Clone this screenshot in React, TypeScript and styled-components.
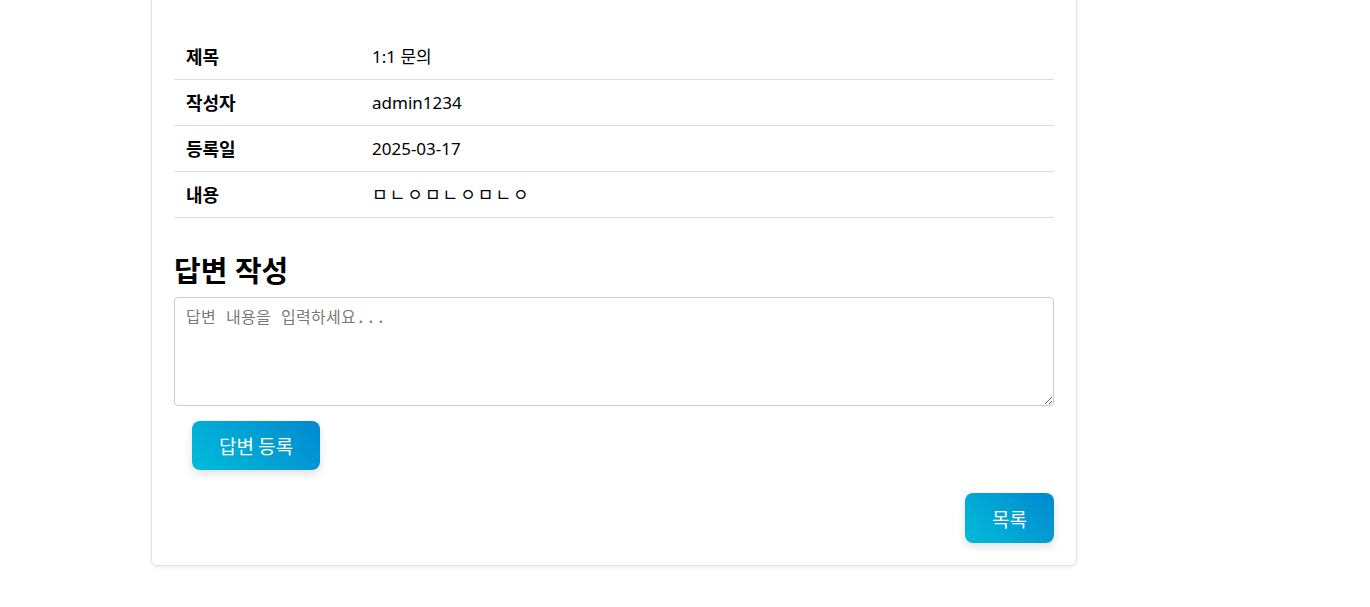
import React from "react";
import styled, { createGlobalStyle } from "styled-components";

const GlobalStyle = createGlobalStyle`
  html, body {
    margin: 0;
    padding: 0;
    background: #ffffff;
    overflow: hidden;
  }
  body {
    font-family: "Noto Sans", "Noto Sans CJK KR", sans-serif;
    color: #000000;
  }
`;

const Page = styled.div`
  width: 1370px;
  height: 607px;
  overflow: hidden;
`;

const Card = styled.div`
  box-sizing: border-box;
  width: 926px;
  margin: -40px 0 0 151px;
  padding: 73px 22px 22px;
  background: #ffffff;
  border: 1px solid #e3e3e3;
  border-radius: 6px;
  box-shadow: 0 1px 4px rgba(0, 0, 0, 0.08);
  display: flex;
  flex-direction: column;
`;

const InfoTable = styled.table`
  width: 100%;
  border-collapse: collapse;
`;

const Row = styled.tr`
  border-bottom: 1px solid #dddddd;
`;

const Label = styled.th`
  width: 162px;
  padding: 12px 12px 11px;
  text-align: left;
  font-size: 18px;
  font-weight: 700;
  line-height: 22px;
`;

const Value = styled.td<{ $spaced?: boolean }>`
  padding: 12px 12px 11px;
  font-size: 17px;
  line-height: 22px;
  letter-spacing: ${(p) => (p.$spaced ? "2px" : "0")};
`;

const Heading = styled.h2`
  margin: 35px 0 8px;
  font-size: 29px;
  font-weight: 700;
  line-height: 36px;
`;

const AnswerInput = styled.textarea`
  box-sizing: border-box;
  width: 100%;
  height: 109px;
  padding: 10px 11px;
  border: 1px solid #cccccc;
  border-radius: 4px;
  font-family: "DejaVu Sans Mono", "Noto Sans CJK KR", monospace;
  font-size: 16px;
  line-height: 20px;
  letter-spacing: 0.3px;
  resize: vertical;
  outline: none;

  &::placeholder {
    color: #7a7a7a;
  }
`;

const GradientButton = styled.button<{ $align?: "start" | "end" }>`
  align-self: ${(p) => (p.$align === "end" ? "flex-end" : "flex-start")};
  box-sizing: border-box;
  height: 50px;
  padding: 0 27px;
  border: none;
  border-radius: 8px;
  background: linear-gradient(45deg, #00bcd8 0%, #0288d1 100%);
  color: #ffffff;
  font-family: "Noto Sans CJK KR", sans-serif;
  font-size: 19px;
  box-shadow: 0 4px 8px rgba(0, 0, 0, 0.12);
  cursor: pointer;
`;

const SubmitButton = styled(GradientButton)`
  height: 49px;
  margin: 15px 0 0 18px;
`;

const ListButton = styled(GradientButton)`
  margin-top: 23px;
`;

const rows: [string, string][] = [
  ["제목", "1:1 문의"],
  ["작성자", "admin1234"],
  ["등록일", "2025-03-17"],
  ["내용", "ㅁㄴㅇㅁㄴㅇㅁㄴㅇ"],
];

export default function App() {
  return (
    <Page>
      <GlobalStyle />
      <Card>
        <InfoTable>
          <tbody>
            {rows.map(([k, v]) => (
              <Row key={k}>
                <Label>{k}</Label>
                <Value $spaced={k === "내용"}>{v}</Value>
              </Row>
            ))}
          </tbody>
        </InfoTable>
        <Heading>답변 작성</Heading>
        <AnswerInput placeholder="답변 내용을 입력하세요..." />
        <SubmitButton>답변 등록</SubmitButton>
        <ListButton $align="end">목록</ListButton>
      </Card>
    </Page>
  );
}
